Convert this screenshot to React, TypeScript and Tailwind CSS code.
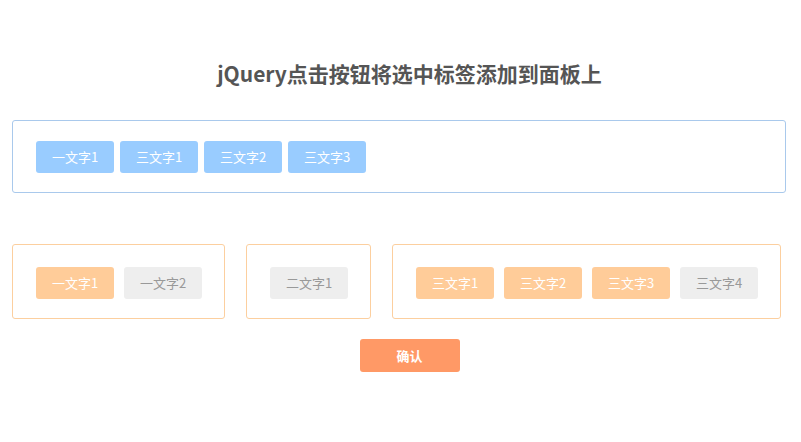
import React from 'react';

type Tag = { text: string; on: boolean };

const TOP: string[] = ['一文字1', '三文字1', '三文字2', '三文字3'];

const GROUPS: { tags: Tag[] }[] = [
  { tags: [{ text: '一文字1', on: true }, { text: '一文字2', on: false }] },
  { tags: [{ text: '二文字1', on: false }] },
  {
    tags: [
      { text: '三文字1', on: true },
      { text: '三文字2', on: true },
      { text: '三文字3', on: true },
      { text: '三文字4', on: false },
    ],
  },
];

const font = { fontFamily: '"Noto Sans CJK SC", "Liberation Sans", sans-serif' };

export default function App() {
  return (
    <div className="w-[801px] h-[442px] bg-white" style={font}>
      <h1 className="pt-[58px] pl-[18px] h-[108px] text-center text-[21px] leading-[30px] font-bold text-[#555]">
        jQuery点击按钮将选中标签添加到面板上
      </h1>

      {/* selected panel */}
      <div className="ml-3 w-[774px] h-[73px] mt-[12px] border border-[#a9c9ec] rounded-[3px] flex items-center gap-[6px] pl-[23px]">
        {TOP.map((t, i) => (
          <span key={i} className="w-[78px] h-[32px] rounded-[3px] bg-[#99ccff] text-white text-[13px] flex items-center justify-center">
            {t}
          </span>
        ))}
      </div>

      {/* tag groups */}
      <div className="ml-3 mt-[51px] flex gap-[21px]">
        {GROUPS.map((g, gi) => (
          <div key={gi} className="h-[75px] border border-[#fccf9f] rounded-[3px] flex items-center gap-[10px] pl-[23px] pr-[22px] pt-[2px]">
            {g.tags.map((t, i) => (
              <span
                key={i}
                className={
                  t.on
                    ? 'w-[78px] h-[32px] rounded-[3px] bg-[#ffcc99] text-white text-[13px] flex items-center justify-center'
                    : 'w-[78px] h-[32px] rounded-[3px] bg-[#eeeeee] text-[#999] text-[13px] flex items-center justify-center'
                }
              >
                {t.text}
              </span>
            ))}
          </div>
        ))}
      </div>

      <div className="mt-[20px] pl-[18px] flex justify-center">
        <button className="w-[100px] h-[33px] rounded-[3px] bg-[#ff9966] text-white text-[13px] font-bold">确认</button>
      </div>
    </div>
  );
}
